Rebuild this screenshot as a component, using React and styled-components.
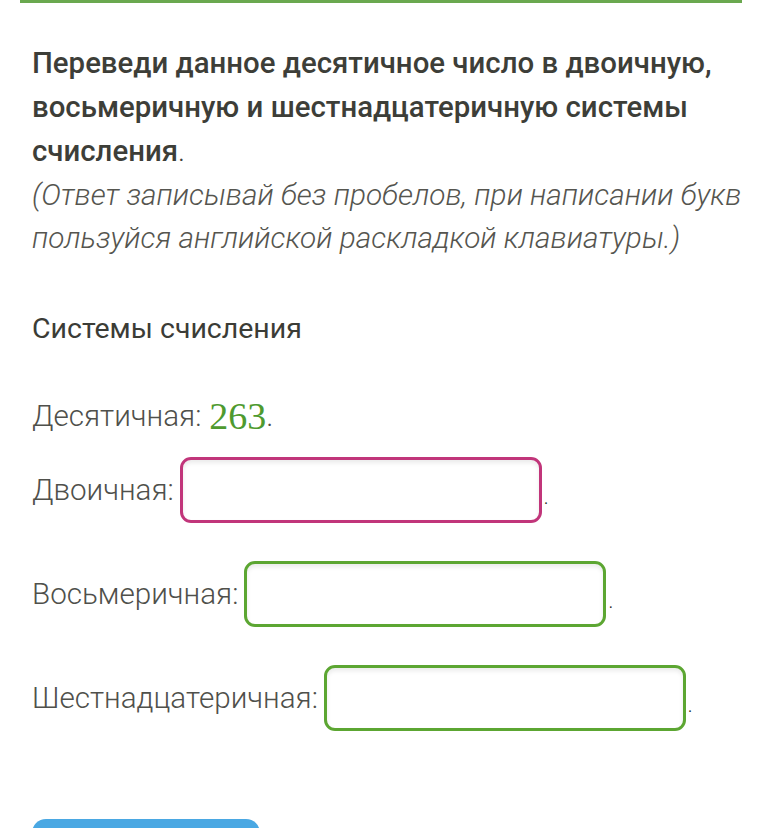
import React from 'react';
import styled, { createGlobalStyle } from 'styled-components';

const GlobalStyle = createGlobalStyle`
  body {
    margin: 0;
    background: #ffffff;
    font-family: 'Roboto', 'Noto Sans', sans-serif;
  }
`;

const Page = styled.div`
  width: 772px;
  height: 828px;
  overflow: hidden;
  padding: 0 30px 0 32px;
  box-sizing: border-box;
  position: relative;
`;

const TopRule = styled.div`
  height: 3px;
  margin: 0 0 0 -12px;
  background: #6aa84f;
`;

const Title = styled.div`
  margin-top: 38px;
  font-size: 29.4px;
  line-height: 44px;
  font-weight: 500;
  color: #3d3e38;
`;

const Dot = styled.span`
  font-weight: 300;
`;

const Hint = styled.div`
  font-size: 29.8px;
  line-height: 43px;
  font-style: italic;
  font-weight: 300;
  color: #55554f;
`;

const Subtitle = styled.div`
  margin-top: 50px;
  font-size: 28.5px;
  line-height: 40px;
  font-weight: 400;
  color: #3b3c36;
`;

const Decimal = styled.div`
  margin-top: 47px;
  height: 40px;
  display: flex;
  align-items: center;
  font-size: 29.6px;
  font-weight: 300;
  color: #4f504b;
`;

const Number = styled.span`
  font-family: 'Liberation Serif', serif;
  font-size: 38px;
  color: #4e9a2f;
  margin-left: 8px;
`;

const Fields = styled.div`
  margin-top: 21px;
  display: flex;
  flex-direction: column;
  gap: 38px;
`;

const Row = styled.div`
  display: flex;
  align-items: center;
  height: 66px;
  font-size: 29.6px;
  font-weight: 300;
  color: #4f504b;
`;

const Field = styled.div`
  width: 356px;
  height: 60px;
  margin-left: 6px;
  border: 3px solid ${p => p.$color};
  border-radius: 11px;
  box-shadow: inset 0 3px 4px rgba(0, 0, 0, 0.08);
  background: #fff;
`;

const End = styled.span`
  font-size: 20px;
  color: #222;
  align-self: flex-end;
  margin: 0 0 14px 2px;
`;

const Button = styled.div`
  position: absolute;
  left: 32px;
  top: 819px;
  width: 228px;
  height: 50px;
  border-radius: 14px;
  background: #4aa8e3;
`;

const rows = [
  { label: 'Двоичная:', color: '#c1357a' },
  { label: 'Восьмеричная:', color: '#5ca632' },
  { label: 'Шестнадцатеричная:', color: '#5ca632' },
];

export default function App() {
  return (
    <Page>
      <GlobalStyle />
      <TopRule />
      <Title>
        Переведи данное десятичное число в двоичную, восьмеричную и шестнадцатеричную системы счисления<Dot>.</Dot>
      </Title>
      <Hint>
        (Ответ записывай без пробелов, при написании букв пользуйся английской раскладкой клавиатуры.)
      </Hint>
      <Subtitle>Системы счисления</Subtitle>
      <Decimal>
        Десятичная:<Number>263</Number>.
      </Decimal>
      <Fields>
        {rows.map(r => (
          <Row key={r.label}>
            {r.label}
            <Field $color={r.color} />
            <End>.</End>
          </Row>
        ))}
      </Fields>
      <Button />
    </Page>
  );
}
